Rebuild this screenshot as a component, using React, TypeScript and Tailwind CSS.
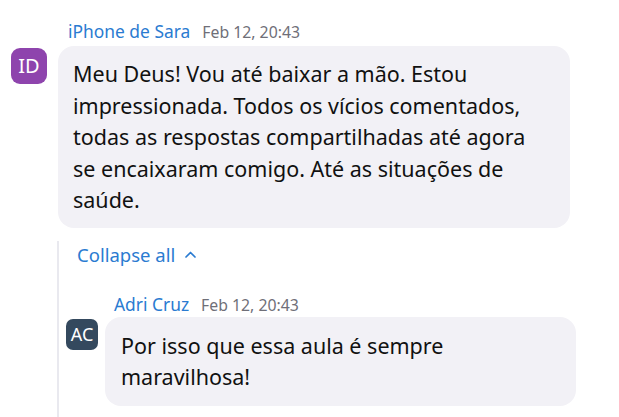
import React from 'react';

const font = "font-['Segoe_UI','Noto_Sans','Open_Sans',sans-serif]";

const Header = ({ name, time }: { name: string; time: string }) => (
  <div className="flex items-baseline gap-[12px] leading-[24px]">
    <span className="text-[17.4px] text-[#2a7bd1]">{name}</span>
    <span className="text-[15.8px] text-[#6f6f78]">{time}</span>
  </div>
);

export default function App() {
  return (
    <div className={`w-[619px] h-[417px] overflow-hidden bg-white ${font}`}>
      {/* top message */}
      <div className="pt-[19px] pl-[68px]">
        <Header name="iPhone de Sara" time="Feb 12, 20:43" />
      </div>
      <div className="mt-[2px] flex pl-[11px]">
        <div className="mt-[2px] flex h-[36px] w-[36px] shrink-0 items-center justify-center rounded-[9px] bg-[#8e44ad] text-[20px] text-white">
          ID
        </div>
        <div className="ml-[11px] w-[512px] rounded-[16px] bg-[#f2f1f6] px-[15px] py-[12px] text-[21.5px] leading-[31.5px] text-[#111]">
          Meu Deus! Vou até baixar a mão. Estou<br />
          impressionada. Todos os vícios comentados,<br />
          todas as respostas compartilhadas até agora<br />
          se encaixaram comigo. Até as situações de<br />
          saúde.
        </div>
      </div>

      {/* thread */}
      <div className="ml-[57px] mt-[13px] border-l-2 border-[#e9e9ef] pb-[20px]">
        <div className="flex items-center gap-[9px] pl-[18px] pt-[2px] text-[18.5px] leading-[24px] text-[#2a7bd1]">
          <span>Collapse all</span>
          <svg width="13" height="9" viewBox="0 0 13 9" fill="none" stroke="currentColor" strokeWidth="1.7" strokeLinecap="round" strokeLinejoin="round">
            <path d="M2 7 6.5 2.5 11 7" />
          </svg>
        </div>
        <div className="mt-[25px] pl-[55px]">
          <Header name="Adri Cruz" time="Feb 12, 20:43" />
        </div>
        <div className="flex pl-[7px]">
          <div className="mt-[2px] flex h-[31px] w-[32px] shrink-0 items-center justify-center rounded-[7px] bg-[#34495e] text-[18px] text-white">
            AC
          </div>
          <div className="ml-[7px] w-[471px] rounded-[16px] bg-[#f2f1f6] px-[16px] py-[13px] text-[21.5px] leading-[31.5px] text-[#111]">
            Por isso que essa aula é sempre<br />
            maravilhosa!
          </div>
        </div>
      </div>
    </div>
  );
}
